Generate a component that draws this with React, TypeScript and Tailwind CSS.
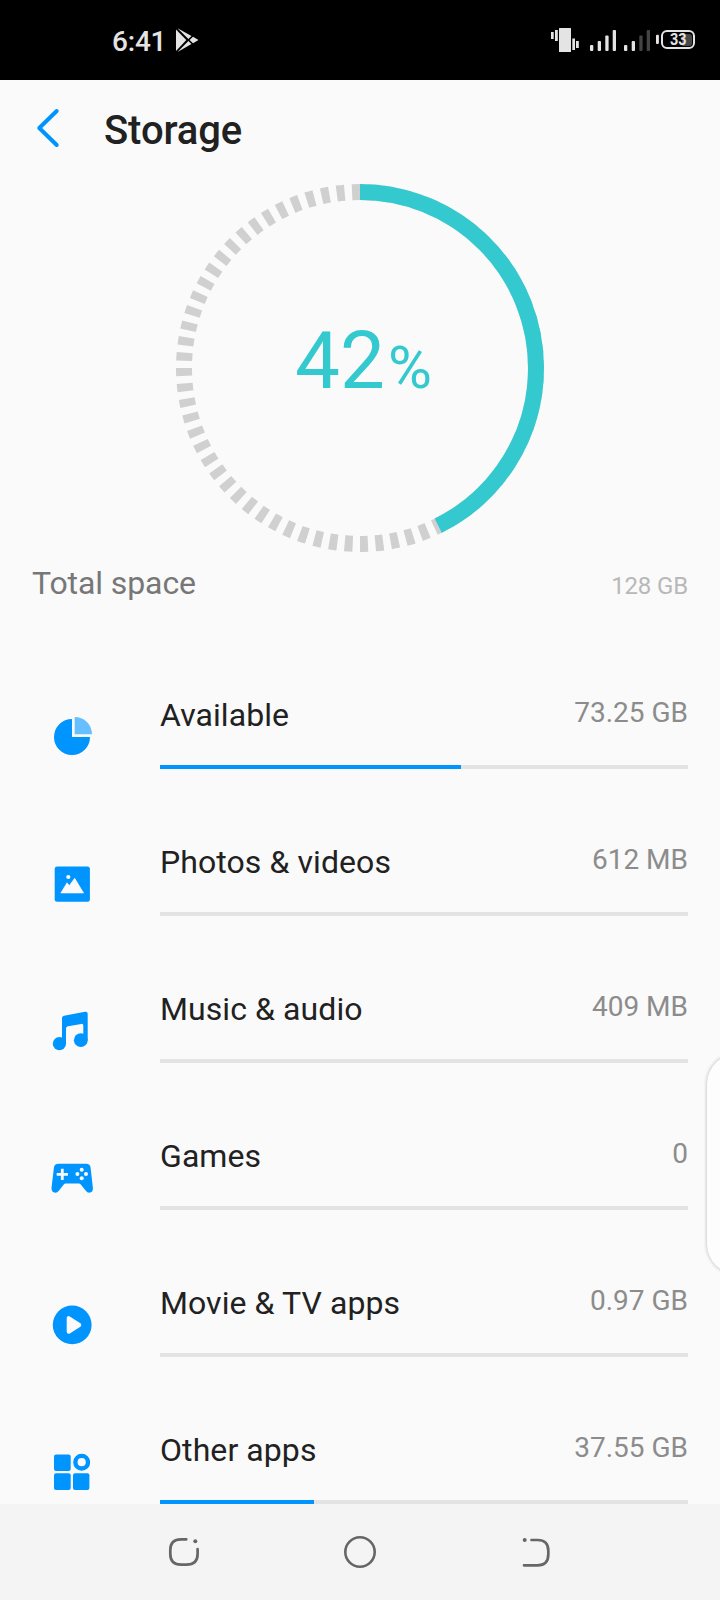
import React from 'react';

interface StorageItem {
  name: string;
  size: string;
  percent: number;
  icon: React.ReactNode;
}

const items: StorageItem[] = [
  {
    name: 'Available',
    size: '73.25 GB',
    percent: 57.1,
    icon: (
      <>
        <path d="M24 6a18 18 0 1 0 18 18H24z" />
        <path d="M26.7 4A17.3 17.3 0 0 1 44 21.3H26.7z" fill="#66bfff" />
      </>
    ),
  },
  {
    name: 'Photos & videos',
    size: '612 MB',
    percent: 0,
    icon: (
      <>
        <rect x="6.7" y="6.5" width="35.2" height="35.2" rx="2.5" />
        <circle cx="20.3" cy="17" r="2.1" fill="#fafafa" />
        <path d="M12.8 33L19 22.8L21.3 25.6L26.7 18.2L35.6 33z" fill="#fafafa" stroke="#fafafa" strokeWidth="0.6" strokeLinejoin="round" />
      </>
    ),
  },
  {
    name: 'Music & audio',
    size: '409 MB',
    percent: 0,
    icon: (
      <>
        <path d="M14 11.2q0-2 2-2.4L37 4.8q2.7-.5 2.7 2V33.3h-4.4V18.6q0-2-2-1.7L20 19.3q-2 .4-2 2V36.7h-4z" />
        <circle cx="11.4" cy="36.7" r="6.6" />
        <circle cx="32.8" cy="33.2" r="6.9" />
      </>
    ),
  },
  {
    name: 'Games',
    size: '0',
    percent: 0,
    icon: (
      <>
        <path d="M10.5 9.8H38q4.2 0 4.6 4L44.9 34q.2 4.6-3.6 4.7-2.2 0-3.7-2.2L32.8 30.5q-.8-1-2-1H17.8q-1.2 0-2 1L11 36.5q-1.500 2.200-3.700 2.200-3.800-.1-3.800-4.700L5.900 13.800q.4-4 4.600-4z" />
        <path d="M14.3 14.8v11.2M8.7 20.4h11.2" stroke="#fafafa" strokeWidth="2.8" />
        <g fill="#fafafa">
          <circle cx="33.7" cy="15.7" r="2" />
          <circle cx="33.7" cy="24.3" r="2" />
          <circle cx="29.4" cy="20" r="2" />
          <circle cx="38" cy="20" r="2" />
        </g>
      </>
    ),
  },
  {
    name: 'Movie & TV apps',
    size: '0.97 GB',
    percent: 0,
    icon: (
      <>
        <circle cx="24.2" cy="23.9" r="19.4" />
        <path d="M20.7 17.2V30.8L31.3 24z" fill="#fafafa" stroke="#fafafa" strokeWidth="4" strokeLinejoin="round" />
      </>
    ),
  },
  {
    name: 'Other apps',
    size: '37.55 GB',
    percent: 29.2,
    icon: (
      <>
        <rect x="6" y="6.5" width="16.7" height="16.5" rx="2" />
        <rect x="6" y="25.3" width="16.7" height="16.7" rx="2" />
        <rect x="25" y="25.3" width="16.4" height="16.7" rx="2" />
        <circle cx="33.7" cy="14.2" r="6.3" fill="none" stroke="#0094ff" strokeWidth="4.4" />
      </>
    ),
  },
];

const StatusBar: React.FC = () => (
  <div className="flex h-20 shrink-0 items-center bg-black pl-28 pr-[25px] text-[#e4e4e4]">
    <span className="pt-[3px] text-[28px] font-medium leading-10 tracking-[-0.2px]">6:41</span>
    <svg className="ml-[10px] h-6 w-6" viewBox="0 0 24 24" fill="currentColor">
      <path d="M0 1.5L10.3 12L0 23z" />
      <path d="M1.5 .3L15.5 8L12.4 11z" />
      <path d="M1.5 23.9L15.5 16.1L12.4 13z" />
      <path d="M13.6 12L17 8.8L22.5 12L17 15.3z" />
    </svg>
    <svg className="ml-auto h-6 w-[110px]" viewBox="550 28 110 24" fill="currentColor">
      <rect x="551" y="32" width="2.7" height="7" />
      <rect x="555" y="30" width="2.8" height="11" />
      <rect x="559" y="28" width="12" height="24" rx="0.5" />
      <rect x="572.3" y="38.5" width="2.7" height="11.5" />
      <rect x="576" y="41" width="2.8" height="7" />
      <rect x="590" y="45" width="3.3" height="6" rx="1" />
      <rect x="597.7" y="41" width="3.3" height="10" rx="1" />
      <rect x="605.3" y="35.5" width="3.3" height="15.5" rx="1" />
      <rect x="612.7" y="30" width="3.3" height="21" rx="1" />
      <rect x="624" y="45" width="3.3" height="6" rx="1" />
      <rect x="631.7" y="41" width="3.3" height="10" rx="1" />
      <rect x="639.3" y="35.5" width="3.3" height="15.5" rx="1" fill="#444" />
      <rect x="646.7" y="30" width="3.3" height="21" rx="1" fill="#444" />
      <rect x="656" y="34.7" width="2.9" height="9.3" rx="1" />
    </svg>
    <div className="relative ml-px -mt-px flex h-[19px] w-[34px] items-center justify-center rounded-[6px] border-2 border-[#e4e4e4]">
      <div className="absolute right-px top-[1.500px] h-[12px] w-[10px] rounded-r-[3px] bg-[#484848]" />
      <span className="relative inline-block scale-x-90 text-[16px] font-bold leading-4">33</span>
    </div>
  </div>
);

const UsageRing: React.FC = () => (
  <div className="relative mx-auto h-[368px] w-[368px]">
    <svg className="h-full w-full" viewBox="-184 -184 368 368" fill="none" strokeWidth="16">
      <circle r="176" stroke="#d0d0d0" pathLength="72" strokeDasharray="0.521 0.479" transform="rotate(-90) scale(1 -1)" />
      <circle r="176" stroke="#33c9cf" pathLength="360" strokeDasharray="153.6 206.4" transform="rotate(-90)" />
    </svg>
    <div className="absolute inset-0 flex items-baseline justify-center pl-[7px] pt-[117px] text-[#33c9cf]">
      <span className="text-[80px] leading-[120px]">42</span>
      <span className="ml-[3px] text-[60px] leading-[80px]">%</span>
    </div>
  </div>
);

const StorageRow: React.FC<{ item: StorageItem }> = ({ item }) => (
  <div className="flex h-[147px] pl-12 pr-8">
    <svg className="mt-[91px] h-12 w-12 shrink-0" viewBox="0 0 48 48" fill="#0094ff">
      {item.icon}
    </svg>
    <div className="ml-16 flex flex-1 flex-col">
      <div className="flex justify-between pt-[71px] leading-10">
        <span className="pt-[2px] text-[32px] tracking-[0.08px] text-[#212121]">{item.name}</span>
        <span className="text-[28px] text-[#8c8c8c]">{item.size}</span>
      </div>
      <div className="mt-auto h-1 bg-[#e3e3e3]">
        <div className="h-full bg-[#0094ff]" style={{ width: `${item.percent}%` }} />
      </div>
    </div>
  </div>
);

const NavBar: React.FC = () => (
  <div className="flex h-24 shrink-0 items-center justify-center gap-[136px] bg-[#f4f4f4] text-[#666]">
    <svg className="h-10 w-10" viewBox="0 0 40 40" fill="none" stroke="currentColor" strokeWidth="2.7" strokeLinecap="round">
      <path d="M22.3 7.3H17Q6.3 7.3 6.3 18V22Q6.3 32.7 17 32.7H22.5Q33.6 32.7 33.6 22V17.2" />
      <circle cx="31.3" cy="9.3" r="2" fill="currentColor" stroke="none" />
    </svg>
    <svg className="h-10 w-10" viewBox="0 0 40 40" fill="none" stroke="currentColor" strokeWidth="2.6">
      <circle cx="20" cy="20" r="14.7" />
    </svg>
    <svg className="h-10 w-10" viewBox="0 0 40 40" fill="none" stroke="currentColor" strokeWidth="2.7" strokeLinecap="round">
      <path d="M15.5 8H21.5Q32.3 8 32.3 18.5V22.5Q32.3 33.3 21.5 33.3H8" />
      <circle cx="8.7" cy="8" r="2" fill="currentColor" stroke="none" />
    </svg>
  </div>
);

const App: React.FC = () => {
  return (
    <div className="relative flex h-[1600px] w-[720px] flex-col overflow-hidden bg-[#fafafa] font-['Roboto',sans-serif]">
      <StatusBar />

      <header className="flex h-[104px] shrink-0 items-start pl-9">
        <svg className="mt-7 h-10 w-6" viewBox="0 0 24 40" fill="none" stroke="#0094ff" strokeWidth="4" strokeLinecap="round" strokeLinejoin="round">
          <path d="M20.7 3L3.3 20L20.7 37" />
        </svg>
        <h1 className="ml-11 mt-[27px] text-[40px] font-medium leading-[48px] tracking-[-0.1px] text-[#212121]">Storage</h1>
      </header>

      <main className="flex-1">
        <UsageRing />
        <div className="flex h-[70px] items-baseline justify-between px-8 pt-[11px] leading-10">
          <span className="text-[32px] tracking-[-0.1px] text-[#777]">Total space</span>
          <span className="text-[24px] tracking-[-0.15px] text-[#b8b8b8]">128 GB</span>
        </div>
        {items.map((item) => (
          <StorageRow key={item.name} item={item} />
        ))}
      </main>

      <NavBar />

      {/* edge panel handle */}
      <div className="absolute -right-12 top-[1054px] h-[220px] w-[61px] rounded-[30px] bg-[#fdfdfd] shadow-[0_0_3px_1px_#cfcfcf]" />
    </div>
  );
};

export default App;
